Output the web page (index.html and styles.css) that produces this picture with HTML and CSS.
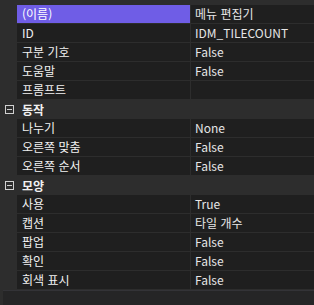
FILE: index.html
```html
<!DOCTYPE html>
<html lang="ko">
<head>
  <meta charset="UTF-8" />
  <title>속성</title>
  <link rel="stylesheet" href="styles.css">
</head>
<body>

  <div class="grid">
    <div class="row selected"><span class="name">(이름)</span><span class="value">메뉴 편집기</span></div>
    <div class="row"><span class="name">ID</span><span class="value">IDM_TILECOUNT</span></div>
    <div class="row"><span class="name">구분 기호</span><span class="value">False</span></div>
    <div class="row"><span class="name">도움말</span><span class="value">False</span></div>
    <div class="row"><span class="name">프롬프트</span><span class="value"></span></div>

    <!-- 동작 -->
    <div class="category"><span class="toggle"></span>동작</div>
    <div class="row"><span class="name">나누기</span><span class="value">None</span></div>
    <div class="row"><span class="name">오른쪽 맞춤</span><span class="value">False</span></div>
    <div class="row"><span class="name">오른쪽 순서</span><span class="value">False</span></div>

    <!-- 모양 -->
    <div class="category"><span class="toggle"></span>모양</div>
    <div class="row"><span class="name">사용</span><span class="value">True</span></div>
    <div class="row"><span class="name">캡션</span><span class="value">타일 개수</span></div>
    <div class="row"><span class="name">팝업</span><span class="value">False</span></div>
    <div class="row"><span class="name">확인</span><span class="value">False</span></div>
    <div class="row"><span class="name">회색 표시</span><span class="value">False</span></div>
  </div>

  <div class="description"></div>

</body>
</html>
```

FILE: styles.css
```css
:root {
  --gutter: #2d2d2d;
  --cell: #1f1f1f;
  --line: #2d2d2d;
  --select: #6f5de6;
  --text: #f1f1f1;
  --value: #e6e6e6;
}

* {
  box-sizing: border-box;
  margin: 0;
  padding: 0;
}

body {
  width: 314px;
  height: 305px;
  overflow: hidden;
  background: var(--gutter);
  font-family: "Segoe UI", "Noto Sans CJK KR", "Noto Sans", sans-serif;
  font-size: 12px;
  color: var(--text);
  padding-top: 5px;
}

.grid {
  display: flex;
  flex-direction: column;
}

.row {
  display: grid;
  grid-template-columns: 174px 1fr;
  height: 19px;
  margin-left: 17px;
  background: var(--cell);
  border-bottom: 1px solid var(--line);
}

.row span {
  display: flex;
  align-items: center;
  line-height: 18px;
  white-space: nowrap;
  overflow: hidden;
}

.name {
  padding-left: 5px;
  border-right: 1px solid var(--line);
}

.value {
  padding-left: 4px;
  color: var(--value);
}

.selected .name {
  background: var(--select);
  color: #fff;
}

.category {
  display: flex;
  align-items: center;
  height: 19px;
  padding-left: 5px;
  gap: 8px;
  font-weight: bold;
  background: var(--gutter);
}

.toggle {
  position: relative;
  width: 9px;
  height: 9px;
  border: 1px solid #d0d0d0;
}

.toggle::after {
  content: "";
  position: absolute;
  left: 1px;
  right: 1px;
  top: 3px;
  height: 1px;
  background: #d0d0d0;
}

.description {
  height: 15px;
  margin-left: 3px;
  background: #252526;
  border-top: 1px solid #333337;
}
```
